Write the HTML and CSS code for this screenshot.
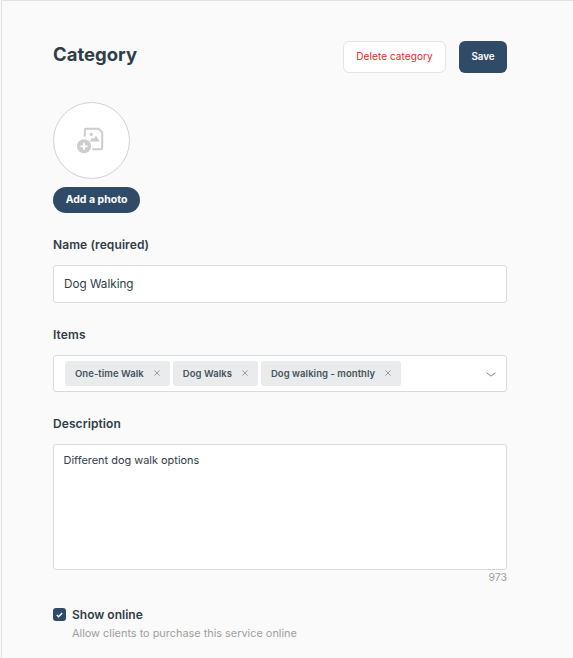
FILE: index.html
```html
<!DOCTYPE html>
<html lang="en">
	<head>
		<meta charset="UTF-8">
		<meta name="viewport" content="width=device-width, initial-scale=1.0">
		<title>Category</title>
		<link rel="stylesheet" href="styles.css">
	</head>
	<body>
	<form class="category">
		<div class="header">
			<h1>Category</h1>
			<button type="button" class="button delete">Delete category</button>
			<button type="button" class="button save">Save</button>
		</div>

		<div class="photo">
			<svg width="28" height="28" viewBox="0 0 28 28">
				<path d="M7.8 10.5V4.2q0-1.4 1.4-1.4h12.3l3.7 3.7v15.4q0 1.4-1.4 1.4h-8.3" fill="none" stroke="#cdcdcd" stroke-width="2"/>
				<circle cx="14.2" cy="8.4" r="1.6" fill="#cdcdcd"/>
				<path d="M12.6 15.4l2.8-4 1.4 1.5 2.2-3.3 3.6 5.8z" fill="#cdcdcd"/>
				<circle cx="7" cy="20.3" r="7" fill="#cdcdcd"/>
				<path d="M7 16.8v7M3.5 20.3h7" stroke="#fff" stroke-width="1.8"/>
			</svg>
		</div>
		<button type="button" class="add-photo">Add a photo</button>

		<label class="label" for="name">Name (required)</label>
		<input id="name" class="field" type="text" value="Dog Walking">

		<div class="label">Items</div>
		<div class="field items">
			<span class="tag">One-time Walk <svg width="6" height="6" viewBox="0 0 6 6"><path d="M.4.4l5.2 5.2M5.6.4L.4 5.6"/></svg></span>
			<span class="tag">Dog Walks <svg width="6" height="6" viewBox="0 0 6 6"><path d="M.4.4l5.2 5.2M5.6.4L.4 5.6"/></svg></span>
			<span class="tag">Dog walking - monthly <svg width="6" height="6" viewBox="0 0 6 6"><path d="M.4.4l5.2 5.2M5.6.4L.4 5.6"/></svg></span>
			<svg class="arrow" width="10" height="5" viewBox="0 0 10 5"><path d="M.5.7L5 4.1 9.5.7"/></svg>
		</div>

		<label class="label" for="description">Description</label>
		<textarea id="description" class="field">Different dog walk options</textarea>
		<div class="counter">973</div>

		<div class="online">
			<span class="checkbox"><svg width="7" height="6" viewBox="0 0 7 6"><path d="M.8 2.9l1.8 1.8L6.2 1"/></svg></span>
			<div>
				<div class="online-title">Show online</div>
				<div class="hint">Allow clients to purchase this service online</div>
			</div>
		</div>
	</form>
	</body>
</html>
```

FILE: styles.css
```css
* {
	box-sizing: border-box;
}

body {
	margin: 0 0 0 1px;
	height: 658px;
	overflow: hidden;
	border-top: 1px solid #e1e2e3;
	border-left: 1px solid #e1e2e3;
	background-color: #fafafa;
	color: #303d47;
	font-family: Inter, "Liberation Sans", sans-serif;
}

.category {
	width: 454px;
	margin-left: 51px;
	padding-top: 40px;
}

.header {
	display: flex;
	height: 32px;
}

h1 {
	flex: 1;
	margin: 0;
	font-size: 18.5px;
	font-weight: 650;
	line-height: 27px;
}

button {
	padding: 0;
	border: none;
	background-color: #304b68;
	color: #fff;
	font-family: inherit;
	white-space: nowrap;
}

.button {
	padding-bottom: 1px;
	border-radius: 6px;
	font-size: 10px;
}

.delete {
	width: 103px;
	margin-right: 13px;
	padding-bottom: 2px;
	border: 1px solid #e4e5e6;
	background-color: #fff;
	color: #df2b25;
	letter-spacing: .08px;
}

.save {
	width: 48px;
	font-size: 9.8px;
	font-weight: 600;
}

.photo {
	width: 77px;
	height: 77px;
	margin-top: 29px;
	padding: 23px 0 0 23px;
	border: 1px solid #d2d2d2;
	border-radius: 50%;
	background-color: #fff;
}

.add-photo {
	display: block;
	width: 87px;
	height: 26px;
	margin-top: 8px;
	padding-bottom: 2px;
	border-radius: 13px;
	font-size: 10.5px;
	font-weight: 700;
}

.label {
	display: block;
	height: 20px;
	margin: 22px 0 10px;
	font-size: 12px;
	font-weight: 600;
	letter-spacing: .09px;
	line-height: 20px;
}

.field {
	display: block;
	width: 100%;
	height: 38px;
	padding: 0 10px;
	border: 1px solid #d8dadb;
	border-radius: 3px;
	outline: none;
	background-color: #fff;
	color: #303d47;
	font-family: inherit;
	font-size: 11.7px;
}

.items {
	display: flex;
	align-items: center;
	gap: 3px;
	height: 37px;
	padding: 0 11px 1px;
}

.tag {
	display: flex;
	align-items: center;
	gap: 10px;
	height: 25px;
	padding: 0 10px;
	border-radius: 3px;
	background-color: #e9ebec;
	color: #46535d;
	font-size: 9.5px;
	font-weight: 600;
	letter-spacing: .05px;
	white-space: nowrap;
}

.tag svg {
	fill: none;
	stroke: #89929a;
	stroke-width: .9;
}

.arrow {
	margin: 3px -1px 0 auto;
	fill: none;
	stroke: #7b838a;
}

textarea.field {
	height: 126px;
	padding: 8px 9.5px;
	font-size: 10.95px;
	line-height: 15px;
	resize: none;
}

.counter {
	height: 15px;
	color: #a0a0a0;
	font-size: 10.5px;
	line-height: 15px;
	text-align: right;
}

.online {
	display: flex;
	gap: 6px;
	margin-top: 20px;
}

.checkbox {
	display: flex;
	align-items: center;
	justify-content: center;
	width: 13px;
	height: 13px;
	margin-top: 3px;
	border-radius: 3px;
	background-color: #304b68;
}

.checkbox svg {
	fill: none;
	stroke: #fff;
	stroke-width: 1.4;
}

.online-title {
	font-size: 12px;
	font-weight: 600;
	line-height: 20px;
}

.hint {
	color: #a0a0a0;
	font-size: 10.9px;
	line-height: 17px;
}
```
